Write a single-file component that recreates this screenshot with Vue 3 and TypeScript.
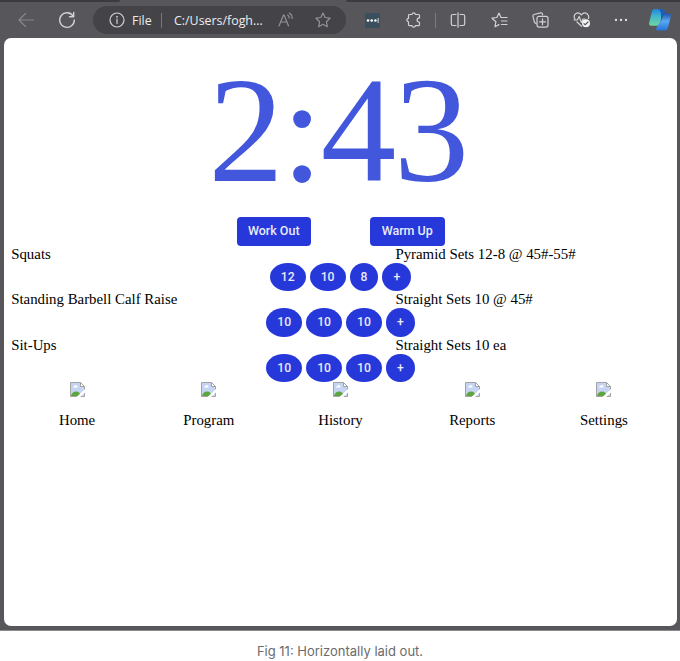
<script setup lang="ts">
interface Exercise {
  name: string
  plan: string
  sets: string[]
}

const modes: string[] = ['Work Out', 'Warm Up']

const exercises: Exercise[] = [
  { name: 'Squats', plan: 'Pyramid Sets 12-8 @ 45#-55#', sets: ['12', '10', '8'] },
  { name: 'Standing Barbell Calf Raise', plan: 'Straight Sets 10 @ 45#', sets: ['10', '10', '10'] },
  { name: 'Sit-Ups', plan: 'Straight Sets 10 ea', sets: ['10', '10', '10'] },
]

const links: string[] = ['Home', 'Program', 'History', 'Reports', 'Settings']
</script>

<template>
  <figure class="figure">
    <div class="window">
      <div class="tabs"><i class="tab-left"></i><i class="tab-right"></i></div>
      <header class="toolbar">
        <svg class="icon back" width="16" height="16" viewBox="0 0 16 16"><path d="M15.5 8H1M7.5 1.5 1 8l6.500 6.500" /></svg>
        <svg class="icon reload" width="18" height="18" viewBox="0 0 18 18"><path d="M15.200 5.200A7.300 7.300 0 1 0 16.300 9M15.700 1.500v4.200h-4.200" /></svg>
        <div class="address">
          <svg class="icon info" width="16" height="16" viewBox="0 0 16 16"><circle cx="8" cy="8" r="7" /><path d="M8 7v4.500" /><path class="dot" d="M7.200 4h1.600v1.600H7.200z" /></svg>
          <span class="scheme">File</span>
          <i class="bar"></i>
          <span class="path">C:/Users/fogh...</span>
          <svg class="icon read" width="16" height="16" viewBox="0 0 16 16"><path d="m1 14 4.500-11h.6L10.500 14M2.600 10h6.300M9.700 3q1.500 1 1.500 3M11.400 1q3 2 2.700 5.500" /></svg>
          <svg class="icon star" width="16" height="16" viewBox="0 0 16 16"><path d="m8 1 2.100 4.500 4.900.7-3.600 3.500.9 5L8 12.300l-4.300 2.400.9-5L1 6.200l4.900-.7z" /></svg>
        </div>
        <svg class="password" width="15" height="15" viewBox="0 0 15 15"><rect width="15" height="15" rx="1.500" fill="#3a4f5d" /><g fill="#fff"><circle cx="3" cy="7.500" r="1.300" /><circle cx="6.700" cy="7.500" r="1.300" /><circle cx="10.400" cy="7.500" r="1.300" /><path d="M12.700 5h.8v5h-.8z" /></g></svg>
        <svg class="icon puzzle" width="16" height="16" viewBox="0 0 16 16"><path d="M3.500 2.500H6q.2-1.700 1.700-1.700t1.700 1.700h3.100q1 0 1 1v2.400q-2.400.2-2.400 2.200t2.400 2.200v2.400q0 1-1 1H9.400q-.2 1.500-1.700 1.500T6 13.700H3.500q-1 0-1-1v-2.900Q.8 9.500.8 8.100t1.700-1.700V3.500q0-1 1-1z" /></svg>
        <i class="rule"></i>
        <svg class="icon split" width="16" height="16" viewBox="0 0 16 16"><path d="M6 2.500H3q-1.700 0-1.700 1.700v7.600q0 1.700 1.700 1.700h3M10 2.500h3q1.700 0 1.700 1.700v7.600q0 1.700-1.700 1.700h-3M8 .8v14.400" /></svg>
        <svg class="icon favorites" width="17" height="16" viewBox="0 0 17 16"><path d="M8 12.600 4 14.700l.9-5L1 6.200l4.900-.7L8 1l2 4.500h6M10.500 9H16M10.500 12.500H16" /></svg>
        <svg class="icon collections" width="17" height="16" viewBox="0 0 17 16"><path d="M4 11.500 2.600 10.600.9 4.300Q.7 2.900 2 2.500l6.600-1.700q1.400-.2 1.800 1l.2 1" /><rect x="5" y="4.300" width="11" height="10.800" rx="2" /><path d="M10.500 6.800v6M7.500 9.800h6" /></svg>
        <svg class="icon heart" width="18" height="16" viewBox="0 0 18 16"><path d="M2 7Q0 3.800 2.700 1.700 5.700-.2 8.300 2.900 11-.2 14 1.700 16.600 3.700 15.300 6.500M4 10l4.500 4.300M1 8h3.300l1.900-3.500 2.200 6L10 7h2" /><circle class="badge" cx="13" cy="11.200" r="4" /><path class="tick" d="m11 11.700 1.300 1 2.700-2.700" /></svg>
        <svg class="more" width="14" height="4" viewBox="0 0 14 4"><g fill="#e4e4e6"><circle cx="2" cy="2" r="1.150" /><circle cx="7" cy="2" r="1.150" /><circle cx="12" cy="2" r="1.150" /></g></svg>
        <svg class="copilot" width="24" height="24" viewBox="0 0 24 24">
          <defs>
            <linearGradient id="leafA" x1="0" y1="0" x2="0" y2="1"><stop offset="0" stop-color="#2385d8" /><stop offset=".45" stop-color="#42b7d0" /><stop offset="1" stop-color="#70d69b" /></linearGradient>
            <linearGradient id="leafB" x1="0" y1="0" x2="0" y2="1"><stop offset="0" stop-color="#1c55b0" /><stop offset=".45" stop-color="#5aa8f6" /><stop offset="1" stop-color="#2773d8" /></linearGradient>
          </defs>
          <path d="M6.500 1H14q2 0 1.400 2L12 15q-.8 2.700-3.500 2.700H3.400Q.5 17.700 1.200 14.500L4 3.300Q4.600 1 6.500 1z" fill="url(#leafA)" />
          <path d="M16.500 5.500h4q3 0 2.200 3.300L20 19.500q-.8 3-3.500 3H10q-2.600 0-1.500-2.800l1.300-2.700q1.900-.8 2.500-3z" fill="url(#leafB)" />
          <path d="M10 1h4q2 0 2.600 2l.8 2.500q-2 0-2.600 2L13 13V6q-.5-4-3-5z" fill="#1d5eb8" />
        </svg>
      </header>

      <main class="page">
        <div class="timer">2:43</div>
        <div class="modes">
          <button v-for="mode in modes" :key="mode" class="mode">{{ mode }}</button>
        </div>
        <section v-for="exercise in exercises" :key="exercise.name" class="exercise">
          <div class="summary">
            <span class="name">{{ exercise.name }}</span>
            <span class="plan">{{ exercise.plan }}</span>
          </div>
          <div class="sets">
            <button v-for="(reps, i) in exercise.sets" :key="i" class="set">{{ reps }}</button>
            <button class="set">+</button>
          </div>
        </section>
        <nav class="links">
          <a v-for="link in links" :key="link" class="link">
            <svg width="15" height="15" viewBox="0 0 15 15">
              <path d="M.5.500h10l4 4v10H.5z" fill="#c5d4f2" stroke="#a3a3a3" />
              <path d="M3 5.500q0-1.300 1.300-1.300Q5 2.500 6.400 3.200 7.800 3.800 7.500 5.500z" fill="#fff" />
              <path d="M1 14q1-4.500 5-4.500T11 14z" fill="#5da63f" />
              <path d="M10.500.500v4h4z" fill="#fff" stroke="#a3a3a3" />
              <path d="M6.500 15 15 7v3.500L10.300 15z" fill="#fff" />
            </svg>
            <span>{{ link }}</span>
          </a>
        </nav>
      </main>
    </div>
    <figcaption class="caption">Fig 11: Horizontally laid out.</figcaption>
  </figure>
</template>

<style>
body {
  margin: 0;
  background: #fff;
}
</style>

<style scoped>
.figure {
  margin: 0;
  width: 680px;
  height: 661px;
  overflow: hidden;
}
.window {
  box-sizing: border-box;
  height: 631px;
  padding: 0 3px 4px 4px;
  background: #57575b;
  border-bottom: 1px solid #8b8b8e;
  display: flex;
  flex-direction: column;
}
.tabs {
  display: flex;
  justify-content: space-between;
  height: 2px;
  margin: 0 -3px 0 -4px;
}
.tab-left {
  width: 120px;
  background: #3b3b3f;
  border-bottom-right-radius: 3px;
}
.tab-right {
  width: 334px;
  background: #3b3b3f;
  border-bottom-left-radius: 3px;
}
.toolbar {
  display: flex;
  align-items: center;
  height: 36px;
  flex: none;
}
.toolbar > * {
  flex: none;
}
.icon {
  fill: none;
  stroke: #d2d2d5;
  stroke-width: 1.2;
  stroke-linejoin: round;
  stroke-linecap: round;
}
.back {
  margin-left: 14px;
  stroke: #88888b;
}
.reload {
  margin-left: 24px;
  stroke-width: 1.4;
}
.address {
  box-sizing: border-box;
  display: flex;
  align-items: center;
  width: 253px;
  height: 28px;
  margin-left: 17px;
  padding-left: 16px;
  border-radius: 14px;
  background: #444448;
  color: #ececee;
  font: 12.4px "Open Sans", "Noto Sans", sans-serif;
  white-space: nowrap;
}
.address > * {
  flex: none;
}
.info .dot {
  fill: #d2d2d5;
  stroke: none;
}
.scheme {
  width: 22px;
  margin-left: 7px;
}
.bar {
  width: 1px;
  height: 15px;
  margin-left: 7px;
  background: #77777a;
}
.path {
  width: 89px;
  margin-left: 12px;
}
.read {
  margin-left: 15px;
  stroke: #929295;
}
.star {
  margin-left: 21px;
  stroke: #929295;
}
.password {
  margin-left: 18.500px;
}
.puzzle {
  margin-left: 26px;
}
.rule {
  width: 1px;
  height: 15px;
  margin-left: 13.500px;
  background: #7c7c80;
}
.split {
  margin-left: 14px;
}
.favorites {
  margin-left: 25px;
}
.collections {
  margin-left: 24px;
}
.heart {
  margin-left: 24px;
}
.heart .badge {
  fill: #f4f4f5;
  stroke: none;
}
.heart .tick {
  stroke: #57575b;
}
.more {
  margin-left: 23px;
}
.copilot {
  margin-left: 20px;
}
.page {
  box-sizing: border-box;
  flex: 1;
  padding: 7px 7.200px;
  border-radius: 7px;
  background: #fff;
  color: #000;
  font: 14.850px/17px "Liberation Serif", serif;
}
.timer {
  height: 172px;
  padding-right: 6px;
  color: #4357dc;
  font-size: 151px;
  line-height: 170px;
  letter-spacing: -2.5px;
  text-align: center;
}
.modes {
  display: flex;
  justify-content: center;
  gap: 59px;
}
button {
  box-sizing: border-box;
  border: 0;
  padding: 0;
  background: #2638d9;
  color: #e9ebfb;
  font: 500 12.500px/28.500px Roboto, sans-serif;
}
.mode {
  width: 74.500px;
  height: 28.500px;
  border-radius: 4px;
}
.exercise {
  height: 45.500px;
}
.summary {
  display: grid;
  grid-template-columns: 7fr 5fr;
  height: 17px;
  line-height: 16.500px;
}
.sets {
  display: flex;
  justify-content: center;
  gap: 4px;
}
.set {
  height: 28.500px;
  padding: 0 11px;
  border-radius: 50%;
  font-size: 12.200px;
}
.links {
  display: grid;
  grid-template-columns: repeat(5, 1fr);
}
.link {
  display: flex;
  flex-direction: column;
  align-items: center;
  gap: 15px;
}
.caption {
  padding-top: 10px;
  color: #6b6b6b;
  font: 13px/20px Inter, sans-serif;
  text-align: center;
}
</style>
